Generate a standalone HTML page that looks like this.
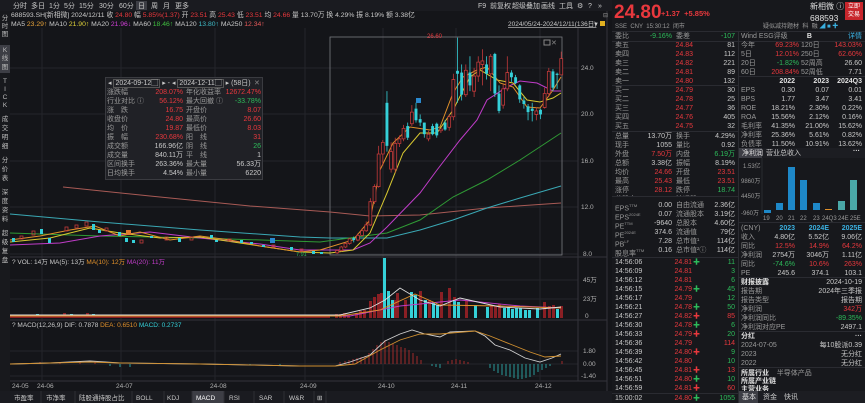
<!DOCTYPE html>
<html><head><meta charset="utf-8">
<style>
*{margin:0;padding:0;box-sizing:border-box}
body{width:865px;height:403px;overflow:hidden;background:#141519;font-family:"Liberation Sans","Noto Sans CJK SC",sans-serif;font-size:7px;color:#c9c9c9;position:relative}
.a{position:absolute;white-space:nowrap;line-height:9px}
.row{position:absolute;display:flex;height:9px;line-height:9px;white-space:nowrap}
.row span{display:block;overflow:visible}
.l{text-align:left}.rt{text-align:right}
.red{color:#e8383d}.grn{color:#2dbb5a}.gry{color:#9a9a9a}.wht{color:#e0e0e0}
.hl{position:absolute;height:1px;background:#2a2b31}
.vl{position:absolute;width:1px;background:#2a2b31}
.cy rect{stroke:none}
</style></head><body>

<svg width="612" height="403" style="position:absolute;left:0;top:0" font-family="Liberation Sans, Noto Sans CJK SC, sans-serif" font-size="7">
<rect x="0" y="0" width="612" height="11" fill="#1a1b20"/>
<g fill="#c9c9c9">
<text x="13" y="8">分时</text><text x="31" y="8">多日</text><text x="49" y="8">1分</text><text x="64" y="8">5分</text><text x="79" y="8">15分</text><text x="99" y="8">30分</text><text x="119" y="8">60分</text>
<rect x="136" y="1" width="11" height="9" fill="#3d3e45"/>
<text x="138" y="8">日</text><text x="151" y="8">周</text><text x="163" y="8">月</text><text x="175" y="8">更多</text>
<text x="478" y="8">F9</text><text x="490" y="8">前复权</text><text x="512" y="8">超级叠加</text><text x="541" y="8">画线</text><text x="559" y="8">工具</text><text x="577" y="8">⚙</text><text x="588" y="8">?</text><text x="598" y="8">»</text>
</g>
<rect x="0" y="11" width="10" height="392" fill="#18191d"/>
<rect x="0" y="45" width="10" height="28" fill="#3d3e45"/>
<g fill="#bdbdbd" font-size="6.5" text-anchor="middle">
<text x="5" y="20">分</text><text x="5" y="28">时</text><text x="5" y="36">图</text>
<text x="5" y="52">K</text><text x="5" y="60">线</text><text x="5" y="69">图</text>
<text x="5" y="83">T</text><text x="5" y="91">I</text><text x="5" y="99">C</text><text x="5" y="107">K</text>
<text x="5" y="121">成</text><text x="5" y="130">交</text><text x="5" y="139">明</text><text x="5" y="148">细</text>
<text x="5" y="162">分</text><text x="5" y="171">价</text><text x="5" y="180">表</text>
<text x="5" y="194">深</text><text x="5" y="203">度</text><text x="5" y="212">资</text><text x="5" y="221">料</text>
<text x="5" y="235">超</text><text x="5" y="244">级</text><text x="5" y="253">复</text><text x="5" y="262">盘</text>
</g>
<g font-size="6.8">
<text x="11" y="17" fill="#c9c9c9">688593.SH[新相微]  2024/12/11  收 <tspan fill="#e8383d">24.80</tspan>  幅 <tspan fill="#e8383d">5.85%(1.37)</tspan>  开 <tspan fill="#e8383d">23.51</tspan>  高 <tspan fill="#e8383d">25.43</tspan>  低 <tspan fill="#e8383d">23.51</tspan>  均 <tspan fill="#e8383d">24.66</tspan>  量 13.70万  换 4.29%  振 8.19%  额 3.38亿</text>
<text x="11" y="26" fill="#c9c9c9">MA5 <tspan fill="#e8a33a">23.29↑</tspan>  MA10 <tspan fill="#e0d23a">21.90↑</tspan>  MA20 <tspan fill="#d13fd8">21.96↓</tspan>  MA60 <tspan fill="#3fbf3f">18.46↑</tspan>  MA120 <tspan fill="#3fbcc8">13.80↑</tspan>  MA250 <tspan fill="#e85a5a">12.34↑</tspan></text>
</g>
<text x="508" y="26" fill="#c9c9c9" font-size="6.5" text-decoration="underline">2024/05/24-2024/12/11(136日)</text>
<text x="593" y="26" fill="#ccc" font-size="6">▼</text><rect x="600" y="21" width="5" height="5" fill="#e0b020"/>
<g stroke="#24252b" stroke-width="1">
<line x1="10" y1="68" x2="578" y2="68"/><line x1="10" y1="114" x2="578" y2="114"/><line x1="10" y1="161" x2="578" y2="161"/><line x1="10" y1="207" x2="578" y2="207"/><line x1="10" y1="254" x2="578" y2="254"/>
<line x1="42" y1="28" x2="42" y2="380"/><line x1="121" y1="28" x2="121" y2="380"/><line x1="215" y1="28" x2="215" y2="380"/><line x1="305" y1="28" x2="305" y2="380"/><line x1="383" y1="28" x2="383" y2="380"/><line x1="456" y1="28" x2="456" y2="380"/><line x1="540" y1="28" x2="540" y2="380"/>
<line x1="10" y1="280" x2="578" y2="280"/><line x1="10" y1="299" x2="578" y2="299"/><line x1="10" y1="351" x2="578" y2="351"/><line x1="10" y1="364" x2="578" y2="364"/><line x1="10" y1="376" x2="578" y2="376"/>
</g>
<line x1="578" y1="28" x2="578" y2="381" stroke="#33343a"/>
<line x1="607" y1="11" x2="607" y2="403" stroke="#33343a"/>
<line x1="10" y1="257" x2="607" y2="257" stroke="#33343a"/>
<line x1="10" y1="320" x2="607" y2="320" stroke="#33343a"/>
<line x1="10" y1="381" x2="607" y2="381" stroke="#33343a"/>
<g fill="#b0b0b0" font-size="6.5">
<text x="581" y="70">24.0</text><text x="581" y="116">20.0</text><text x="581" y="163">16.0</text><text x="581" y="209">12.0</text><text x="583" y="256">8.0</text>
<text x="583" y="282">45万</text><text x="583" y="301">23万</text><text x="585" y="318">0</text>
<text x="583" y="353">1.80</text><text x="583" y="366">0.00</text><text x="581" y="378">-1.40</text>
</g>
<rect x="330" y="37" width="232" height="218" fill="none" stroke="#7a7b80" stroke-width="0.8"/>
<text x="427" y="38" fill="#e8383d" font-size="6">26.60</text>
<rect x="544" y="40" width="6" height="5" fill="none" stroke="#888"/><text x="551" y="45" fill="#888" font-size="7">✕</text>
<g fill="none" stroke-width="1">
<polyline stroke="#a85a55" points="63,187 150,196 250,206 330,212 370,216 420,215 487,208 561,203"/>
<polyline stroke="#3aa8b4" points="10,214 100,222 200,230 300,237 330,238 387,238 420,230 453,220 487,208 520,198 561,186"/>
<polyline stroke="#2f9a35" points="10,233 100,236 200,238 320,242 387,233 420,220 453,197 487,180 520,160 561,133"/>
<polyline stroke="#c03cc8" points="10,245 60,243 100,236 150,232 200,238 260,244 300,250 353,250 370,243 387,227 420,193 437,170 460,140 477,120 487,100 507,87 520,81 537,83 553,91 561,91"/>
<polyline stroke="#d8c830" points="10,242 50,238 90,228 120,233 160,238 200,237 260,246 300,252 330,253 353,250 370,233 387,193 403,153 420,133 437,133 453,110 470,77 480,70 497,80 513,83 527,100 540,102 553,98 561,93"/>
<polyline stroke="#e0902a" points="10,240 40,236 70,230 95,226 120,236 140,232 170,240 200,236 230,240 260,246 300,252 320,250 353,240 370,220 380,170 393,143 410,127 430,130 440,127 453,93 463,77 477,70 487,67 500,83 513,87 527,107 540,108 553,90 561,77"/>
</g>
<g fill="#35d0d8">
<rect x="12" y="238" width="3" height="4"/><rect x="40" y="229" width="3" height="5"/><rect x="48" y="238" width="3" height="5"/><rect x="92" y="224" width="3" height="6"/><rect x="98" y="230" width="3" height="3"/><rect x="118" y="232" width="3" height="4"/><rect x="125" y="238" width="3" height="4"/><rect x="132" y="240" width="3" height="3"/><rect x="150" y="236" width="3" height="2"/><rect x="178" y="238" width="3" height="4"/><rect x="210" y="235" width="3" height="3"/><rect x="215" y="240" width="3" height="2"/><rect x="240" y="240" width="3" height="3"/><rect x="250" y="242" width="3" height="2"/><rect x="262" y="245" width="3" height="2"/><rect x="290" y="247" width="3" height="3"/><rect x="312" y="251" width="3" height="3"/><rect x="320" y="252" width="3" height="2"/>
</g>
<g fill="none" stroke="#c23a3a" stroke-width="0.8">
<rect x="20" y="236" width="3" height="3"/><rect x="32" y="231" width="3" height="4"/><rect x="65" y="227" width="3" height="4"/><rect x="75" y="225" width="3" height="3"/><rect x="85" y="222" width="3" height="4"/><rect x="105" y="228" width="3" height="3"/><rect x="140" y="240" width="3" height="3"/><rect x="165" y="237" width="3" height="3"/><rect x="190" y="237" width="3" height="3"/><rect x="228" y="239" width="3" height="2"/><rect x="272" y="245" width="3" height="2"/><rect x="300" y="249" width="3" height="2"/>
</g>
<rect x="126" y="230" width="5" height="5" fill="#e07a30"/><rect x="270" y="238" width="5" height="5" fill="#2a8ad0"/>
<text x="296" y="256" fill="#2dbb5a" font-size="5.5">7.91</text>
<g transform="matrix(4.15 0 0 -11.63 333 347.04)">
<g stroke="#c23a3a" fill="#141519" stroke-width="0.8">
<line x1="1" y1="8.0" x2="1" y2="8.4" vector-effect="non-scaling-stroke"/><rect x="0.65" y="8.1" width="0.7" height="0.2" vector-effect="non-scaling-stroke"/>
<line x1="2" y1="8.2" x2="2" y2="8.7" vector-effect="non-scaling-stroke"/><rect x="1.65" y="8.3" width="0.7" height="0.3" vector-effect="non-scaling-stroke"/>
<line x1="3" y1="8.5" x2="3" y2="9.0" vector-effect="non-scaling-stroke"/><rect x="2.65" y="8.6" width="0.7" height="0.3" vector-effect="non-scaling-stroke"/>
<line x1="4" y1="8.8" x2="4" y2="9.4" vector-effect="non-scaling-stroke"/><rect x="3.65" y="8.9" width="0.7" height="0.4" vector-effect="non-scaling-stroke"/>
<line x1="6" y1="9.1" x2="6" y2="9.8" vector-effect="non-scaling-stroke"/><rect x="5.65" y="9.2" width="0.7" height="0.4" vector-effect="non-scaling-stroke"/>
<line x1="7" y1="9.5" x2="7" y2="10.2" vector-effect="non-scaling-stroke"/><rect x="6.65" y="9.6" width="0.7" height="0.4" vector-effect="non-scaling-stroke"/>
<line x1="8" y1="9.9" x2="8" y2="10.8" vector-effect="non-scaling-stroke"/><rect x="7.65" y="10.0" width="0.7" height="0.5" vector-effect="non-scaling-stroke"/>
<line x1="9" y1="10.4" x2="9" y2="12.8" vector-effect="non-scaling-stroke"/><rect x="8.65" y="10.5" width="0.7" height="2.0" vector-effect="non-scaling-stroke"/>
<line x1="10" y1="12.3" x2="10" y2="14" vector-effect="non-scaling-stroke"/><rect x="9.65" y="12.5" width="0.7" height="1.3" vector-effect="non-scaling-stroke"/>
<line x1="11" y1="13.7" x2="11" y2="17.3" vector-effect="non-scaling-stroke"/><rect x="10.65" y="13.8" width="0.7" height="2.8" vector-effect="non-scaling-stroke"/>
<line x1="12" y1="15.6" x2="12" y2="17.8" vector-effect="non-scaling-stroke"/><rect x="11.65" y="16.6" width="0.7" height="1.0" vector-effect="non-scaling-stroke"/>
<line x1="14" y1="15" x2="14" y2="17.6" vector-effect="non-scaling-stroke"/><rect x="13.65" y="15.3" width="0.7" height="1.5" vector-effect="non-scaling-stroke"/>
<line x1="15" y1="15" x2="15" y2="18" vector-effect="non-scaling-stroke"/><rect x="14.65" y="15.3" width="0.7" height="2.2" vector-effect="non-scaling-stroke"/>
<line x1="16" y1="17.2" x2="16" y2="18.2" vector-effect="non-scaling-stroke"/><rect x="15.65" y="17.5" width="0.7" height="0.4" vector-effect="non-scaling-stroke"/>
<line x1="17" y1="17.7" x2="17" y2="19.1" vector-effect="non-scaling-stroke"/><rect x="16.65" y="17.9" width="0.7" height="0.9" vector-effect="non-scaling-stroke"/>
<line x1="19" y1="19" x2="19" y2="20.8" vector-effect="non-scaling-stroke"/><rect x="18.65" y="19.2" width="0.7" height="1.0" vector-effect="non-scaling-stroke"/>
<line x1="23" y1="17.7" x2="23" y2="18.6" vector-effect="non-scaling-stroke"/><rect x="22.65" y="17.9" width="0.7" height="0.4" vector-effect="non-scaling-stroke"/>
<line x1="26" y1="18.4" x2="26" y2="18.8" vector-effect="non-scaling-stroke"/><rect x="25.65" y="18.6" width="0.7" height="0.15" vector-effect="non-scaling-stroke"/>
<line x1="28" y1="18.6" x2="28" y2="20.0" vector-effect="non-scaling-stroke"/><rect x="27.65" y="18.9" width="0.7" height="0.9" vector-effect="non-scaling-stroke"/>
<line x1="29" y1="19.5" x2="29" y2="23.5" vector-effect="non-scaling-stroke"/><rect x="28.65" y="19.8" width="0.7" height="3.2" vector-effect="non-scaling-stroke"/>
<line x1="32" y1="21.5" x2="32" y2="24.3" vector-effect="non-scaling-stroke"/><rect x="31.65" y="21.7" width="0.7" height="2.1" vector-effect="non-scaling-stroke"/>
<line x1="34" y1="21.5" x2="34" y2="24" vector-effect="non-scaling-stroke"/><rect x="33.65" y="22" width="0.7" height="1.3" vector-effect="non-scaling-stroke"/>
<line x1="35" y1="22.8" x2="35" y2="25" vector-effect="non-scaling-stroke"/><rect x="34.65" y="23.3" width="0.7" height="1.2" vector-effect="non-scaling-stroke"/>
<line x1="36" y1="22.5" x2="36" y2="25.6" vector-effect="non-scaling-stroke"/><rect x="35.65" y="24.3" width="0.7" height="0.3" vector-effect="non-scaling-stroke"/>
<line x1="38" y1="22" x2="38" y2="25.2" vector-effect="non-scaling-stroke"/><rect x="37.65" y="23.5" width="0.7" height="1.5" vector-effect="non-scaling-stroke"/>
<line x1="41" y1="20.5" x2="41" y2="22.6" vector-effect="non-scaling-stroke"/><rect x="40.65" y="20.8" width="0.7" height="1.4" vector-effect="non-scaling-stroke"/>
<line x1="42" y1="22" x2="42" y2="25" vector-effect="non-scaling-stroke"/><rect x="41.65" y="22.2" width="0.7" height="1.4" vector-effect="non-scaling-stroke"/>
<line x1="49" y1="19.5" x2="49" y2="20.6" vector-effect="non-scaling-stroke"/><rect x="48.65" y="20.0" width="0.7" height="0.3" vector-effect="non-scaling-stroke"/>
<line x1="51" y1="20.5" x2="51" y2="22.3" vector-effect="non-scaling-stroke"/><rect x="50.65" y="20.6" width="0.7" height="1.2" vector-effect="non-scaling-stroke"/>
<line x1="52" y1="21.5" x2="52" y2="24" vector-effect="non-scaling-stroke"/><rect x="51.65" y="21.8" width="0.7" height="1.9" vector-effect="non-scaling-stroke"/>
<line x1="55" y1="23.4" x2="55" y2="25.4" vector-effect="non-scaling-stroke"/><rect x="54.65" y="23.4" width="0.7" height="1.4" vector-effect="non-scaling-stroke"/>
</g>
<g class="cy" stroke="#35d0d8" fill="#35d0d8" stroke-width="0.8">
<line x1="5" y1="9.0" x2="5" y2="9.5" vector-effect="non-scaling-stroke"/><rect x="4.65" y="9.2" width="0.7" height="0.15"/>
<line x1="13" y1="16.8" x2="13" y2="22" vector-effect="non-scaling-stroke"/><rect x="12.65" y="17.3" width="0.7" height="3.7"/>
<line x1="18" y1="17.8" x2="18" y2="19.3" vector-effect="non-scaling-stroke"/><rect x="17.65" y="18" width="0.7" height="1.0"/>
<line x1="20" y1="19.3" x2="20" y2="21" vector-effect="non-scaling-stroke"/><rect x="19.65" y="19.5" width="0.7" height="1.0"/>
<line x1="21" y1="19" x2="21" y2="20" vector-effect="non-scaling-stroke"/><rect x="20.65" y="19.3" width="0.7" height="0.3"/>
<line x1="22" y1="18" x2="22" y2="19.3" vector-effect="non-scaling-stroke"/><rect x="21.65" y="18.3" width="0.7" height="1.0"/>
<line x1="24" y1="18.2" x2="24" y2="19.2" vector-effect="non-scaling-stroke"/><rect x="23.65" y="18.3" width="0.7" height="0.7"/>
<line x1="25" y1="18" x2="25" y2="19.3" vector-effect="non-scaling-stroke"/><rect x="24.65" y="18.2" width="0.7" height="1.0"/>
<line x1="27" y1="18.6" x2="27" y2="19.5" vector-effect="non-scaling-stroke"/><rect x="26.65" y="18.7" width="0.7" height="0.6"/>
<line x1="30" y1="21" x2="30" y2="26.6" vector-effect="non-scaling-stroke"/><rect x="29.65" y="23.5" width="0.7" height="0.25"/>
<line x1="31" y1="21.2" x2="31" y2="24.3" vector-effect="non-scaling-stroke"/><rect x="30.65" y="21.7" width="0.7" height="1.9"/>
<line x1="33" y1="22" x2="33" y2="25" vector-effect="non-scaling-stroke"/><rect x="32.65" y="22.5" width="0.7" height="1.1"/>
<line x1="37" y1="23" x2="37" y2="25" vector-effect="non-scaling-stroke"/><rect x="36.65" y="23.5" width="0.7" height="0.8"/>
<line x1="39" y1="21.5" x2="39" y2="25.3" vector-effect="non-scaling-stroke"/><rect x="38.65" y="21.8" width="0.7" height="3.4"/>
<line x1="40" y1="20.1" x2="40" y2="22.5" vector-effect="non-scaling-stroke"/><rect x="39.65" y="20.3" width="0.7" height="1.5"/>
<line x1="43" y1="22.8" x2="43" y2="23.8" vector-effect="non-scaling-stroke"/><rect x="42.65" y="23.2" width="0.7" height="0.4"/>
<line x1="44" y1="22.6" x2="44" y2="23.4" vector-effect="non-scaling-stroke"/><rect x="43.65" y="22.7" width="0.7" height="0.5"/>
<line x1="45" y1="21" x2="45" y2="22.6" vector-effect="non-scaling-stroke"/><rect x="44.65" y="21.3" width="0.7" height="1.2"/>
<line x1="46" y1="20.5" x2="46" y2="21.5" vector-effect="non-scaling-stroke"/><rect x="45.65" y="20.9" width="0.7" height="0.3"/>
<line x1="47" y1="19.5" x2="47" y2="20.9" vector-effect="non-scaling-stroke"/><rect x="46.65" y="20.2" width="0.7" height="0.5"/>
<line x1="48" y1="19.4" x2="48" y2="21" vector-effect="non-scaling-stroke"/><rect x="47.65" y="20.3" width="0.7" height="0.2"/>
<line x1="50" y1="19.6" x2="50" y2="20.5" vector-effect="non-scaling-stroke"/><rect x="49.65" y="20" width="0.7" height="0.4"/>
<line x1="53" y1="22" x2="53" y2="23.9" vector-effect="non-scaling-stroke"/><rect x="52.65" y="22.3" width="0.7" height="1.4"/>
<line x1="54" y1="22.2" x2="54" y2="23.6" vector-effect="non-scaling-stroke"/><rect x="53.65" y="23.4" width="0.7" height="0.1"/>
</g>
</g>
<rect x="416" y="98" width="5" height="5" fill="#2a8ad0"/>
<text x="12" y="264" fill="#c9c9c9" font-size="6.5">?  VOL: 14万  MA(5): 13万  <tspan fill="#e0902a">MA(10): 12万</tspan>  <tspan fill="#c03cc8">MA(20): 11万</tspan></text>
<g fill="#35d0d8">
<rect x="12" y="316" width="3" height="2"/><rect x="30" y="315" width="3" height="3"/><rect x="36" y="314" width="3" height="4"/><rect x="60" y="315" width="3" height="3"/><rect x="70" y="314" width="3" height="4"/><rect x="76" y="315" width="3" height="3"/><rect x="92" y="314" width="3" height="4"/><rect x="100" y="315" width="3" height="3"/><rect x="130" y="316" width="3" height="2"/><rect x="160" y="316" width="3" height="2"/><rect x="190" y="316" width="3" height="2"/><rect x="225" y="316" width="3" height="2"/><rect x="260" y="316" width="3" height="2"/><rect x="300" y="316" width="3" height="2"/>
</g>
<g fill="#8a1f24">
<rect x="10" y="316" width="320" height="2"/><rect x="20" y="315" width="3" height="3"/><rect x="63" y="313" width="3" height="5"/><rect x="86" y="313" width="3" height="5"/><rect x="110" y="315" width="3" height="3"/>
</g>
<g fill="#8a1f24">
<rect x="335" y="314" width="3" height="4"/><rect x="339" y="314" width="3" height="4"/><rect x="343" y="313" width="3" height="5"/><rect x="347" y="315" width="3" height="3"/><rect x="355" y="313" width="3" height="5"/><rect x="359" y="311" width="3" height="7"/><rect x="363" y="310" width="3" height="8"/><rect x="369" y="301" width="3" height="17"/><rect x="373" y="297" width="3" height="21"/><rect x="377" y="294" width="3" height="24"/><rect x="380" y="293" width="3" height="25"/><rect x="394" y="300" width="3" height="18"/><rect x="396" y="293" width="3" height="25"/><rect x="404" y="300" width="3" height="18"/><rect x="419" y="291" width="3" height="27"/><rect x="428" y="300" width="3" height="18"/><rect x="440" y="292" width="3" height="26"/><rect x="448" y="288" width="3" height="30"/><rect x="453" y="297" width="3" height="21"/><rect x="465" y="300" width="3" height="18"/><rect x="490" y="305" width="3" height="13"/><rect x="494" y="306" width="3" height="12"/><rect x="498" y="304" width="3" height="14"/><rect x="543" y="302" width="3" height="16"/><rect x="548" y="306" width="3" height="12"/><rect x="552" y="305" width="3" height="13"/><rect x="560" y="306" width="3" height="12"/>
</g>
<g fill="#35d0d8">
<rect x="383" y="258" width="3" height="60"/><rect x="387" y="291" width="3" height="27"/><rect x="391" y="300" width="3" height="18"/><rect x="410" y="292" width="3" height="26"/><rect x="414" y="295" width="3" height="23"/><rect x="424" y="300" width="3" height="18"/><rect x="432" y="302" width="3" height="16"/><rect x="436" y="305" width="3" height="13"/><rect x="453" y="300" width="3" height="18"/><rect x="457" y="302" width="3" height="16"/><rect x="474" y="305" width="3" height="13"/><rect x="486" y="307" width="3" height="11"/><rect x="503" y="308" width="3" height="10"/><rect x="507" y="307" width="3" height="11"/><rect x="511" y="309" width="3" height="9"/><rect x="515" y="308" width="3" height="10"/><rect x="519" y="308" width="3" height="10"/><rect x="524" y="310" width="3" height="8"/><rect x="528" y="310" width="3" height="8"/><rect x="536" y="308" width="3" height="10"/><rect x="556" y="309" width="3" height="9"/>
</g>
<g fill="none" stroke-width="0.9">
<polyline stroke="#c03cc8" points="10,316 330,316 350,316 400,306 460,300 520,306 561,308"/>
<polyline stroke="#e0902a" points="10,316 340,316 380,310 415,294 440,305 500,306 561,308"/>
<polyline stroke="#dddddd" points="10,315 340,315 370,308 385,300 400,288 420,300 440,306 460,298 500,307 540,309 561,307"/>
</g>
<text x="12" y="327" fill="#c9c9c9" font-size="6.5">?  MACD(12,26,9)  DIF: 0.7878  <tspan fill="#e0902a">DEA: 0.6510</tspan>  <tspan fill="#35d0d8">MACD: 0.2737</tspan></text>
<g stroke="#a02a2a" stroke-width="1">
<line x1="40" y1="364" x2="40" y2="362"/><line x1="60" y1="364" x2="60" y2="362"/><line x1="80" y1="364" x2="80" y2="361"/><line x1="95" y1="364" x2="95" y2="361"/>
<line x1="340" y1="364" x2="340" y2="362"/><line x1="345" y1="364" x2="345" y2="361"/><line x1="349" y1="364" x2="349" y2="360"/><line x1="353" y1="364" x2="353" y2="359"/><line x1="357" y1="364" x2="357" y2="358"/><line x1="361" y1="364" x2="361" y2="357"/><line x1="365" y1="364" x2="365" y2="356"/><line x1="369" y1="364" x2="369" y2="353"/><line x1="373" y1="364" x2="373" y2="349"/><line x1="377" y1="364" x2="377" y2="345"/><line x1="381" y1="364" x2="381" y2="342"/><line x1="385" y1="364" x2="385" y2="340"/><line x1="389" y1="364" x2="389" y2="342"/><line x1="393" y1="364" x2="393" y2="344"/><line x1="397" y1="364" x2="397" y2="345"/><line x1="401" y1="364" x2="401" y2="347"/><line x1="405" y1="364" x2="405" y2="348"/><line x1="409" y1="364" x2="409" y2="350"/><line x1="413" y1="364" x2="413" y2="353"/><line x1="417" y1="364" x2="417" y2="356"/><line x1="421" y1="364" x2="421" y2="360"/>
<line x1="448" y1="364" x2="448" y2="361"/><line x1="452" y1="364" x2="452" y2="360"/><line x1="456" y1="364" x2="456" y2="359"/><line x1="460" y1="364" x2="460" y2="360"/><line x1="464" y1="364" x2="464" y2="361"/><line x1="468" y1="364" x2="468" y2="362"/><line x1="562" y1="364" x2="562" y2="361"/>
</g>
<g stroke="#2a9a9a" stroke-width="1">
<line x1="110" y1="364" x2="110" y2="366"/><line x1="120" y1="364" x2="120" y2="367"/><line x1="130" y1="364" x2="130" y2="367"/><line x1="250" y1="364" x2="250" y2="365"/><line x1="280" y1="364" x2="280" y2="366"/>
<line x1="432" y1="364" x2="432" y2="366"/><line x1="436" y1="364" x2="436" y2="367"/><line x1="440" y1="364" x2="440" y2="368"/>
<line x1="490" y1="364" x2="490" y2="368"/><line x1="494" y1="364" x2="494" y2="371"/><line x1="498" y1="364" x2="498" y2="373"/><line x1="502" y1="364" x2="502" y2="375"/><line x1="506" y1="364" x2="506" y2="376"/><line x1="510" y1="364" x2="510" y2="377"/><line x1="514" y1="364" x2="514" y2="378"/><line x1="518" y1="364" x2="518" y2="379"/><line x1="522" y1="364" x2="522" y2="379"/><line x1="526" y1="364" x2="526" y2="378"/><line x1="530" y1="364" x2="530" y2="377"/><line x1="534" y1="364" x2="534" y2="375"/><line x1="538" y1="364" x2="538" y2="372"/><line x1="542" y1="364" x2="542" y2="370"/><line x1="546" y1="364" x2="546" y2="368"/><line x1="550" y1="364" x2="550" y2="366"/>
</g>
<g fill="none" stroke-width="0.9">
<polyline stroke="#d0d0d0" points="10,364 50,363 90,361 120,363 200,364 300,366 335,366 350,362 370,355 385,341 400,334 412,330 425,334 440,337 450,332 475,331 485,336 495,345 510,350 525,358 540,362 552,358 561,354"/>
<polyline stroke="#d09030" points="10,364 50,363 90,362 120,363 200,364 300,366 335,366 355,364 380,350 400,340 420,334 440,334 475,331 490,336 510,344 530,352 545,357 561,356"/>
</g>
<g fill="#b0b0b0" font-size="6.5">
<text x="12" y="388">24-05</text><text x="37" y="388">24-06</text><text x="116" y="388">24-07</text><text x="210" y="388">24-08</text><text x="300" y="388">24-09</text><text x="378" y="388">24-10</text><text x="451" y="388">24-11</text><text x="535" y="388">24-12</text>
</g>
<rect x="0" y="391" width="612" height="12" fill="#1a1b20"/>
<rect x="192" y="391" width="32" height="12" fill="#3d3e45"/>
<g stroke="#2e2f35"><line x1="41" y1="391" x2="41" y2="403"/><line x1="75" y1="391" x2="75" y2="403"/><line x1="132" y1="391" x2="132" y2="403"/><line x1="164" y1="391" x2="164" y2="403"/><line x1="192" y1="391" x2="192" y2="403"/><line x1="224" y1="391" x2="224" y2="403"/><line x1="254" y1="391" x2="254" y2="403"/><line x1="284" y1="391" x2="284" y2="403"/><line x1="314" y1="391" x2="314" y2="403"/><line x1="326" y1="391" x2="326" y2="403"/></g>
<g fill="#c9c9c9" font-size="6.5">
<text x="14" y="400">市盈率</text><text x="46" y="400">市净率</text><text x="79" y="400">陆股通持股占比</text><text x="136" y="400">BOLL</text><text x="167" y="400">KDJ</text><text x="196" y="400" fill="#fff">MACD</text><text x="229" y="400">RSI</text><text x="259" y="400">SAR</text><text x="289" y="400">W&amp;R</text><text x="317" y="400">⊞</text>
</g>
</svg>

<div style="position:absolute;left:105px;top:77px;width:158px;height:103px;background:#202126;border:1px solid #3a3b40">
<div class="a" style="left:2px;top:1px;color:#c9c9c9">◂ <span style="border:1px solid #555;padding:0 1px">2024-09-12▢</span> ▸ - ◂ <span style="border:1px solid #555;padding:0 1px">2024-12-11▢</span> ▸ (58日)</div>
<div class="a" style="left:148px;top:1px;color:#888">✕</div>
</div>
<div style="position:absolute;left:107px;top:88px">
<div class="row" style="top:0"><span style="width:40px" class="gry">涨跌幅</span><span style="width:36px" class="rt red">208.07%</span><span style="width:34px;padding-left:3px" class="gry">年化收益率</span><span style="width:44px" class="rt red">12672.47%</span></div>
<div class="row" style="top:9px"><span style="width:40px" class="gry">行业对比 ⓘ</span><span style="width:36px" class="rt red">56.12%</span><span style="width:34px;padding-left:3px" class="gry">最大回撤 ⓘ</span><span style="width:44px" class="rt grn">-33.78%</span></div>
<div class="row" style="top:18px"><span style="width:40px" class="gry">涨　跌</span><span style="width:36px" class="rt red">16.75</span><span style="width:34px;padding-left:3px" class="gry">开盘价</span><span style="width:44px" class="rt red">8.07</span></div>
<div class="row" style="top:27px"><span style="width:40px" class="gry">收盘价</span><span style="width:36px" class="rt red">24.80</span><span style="width:34px;padding-left:3px" class="gry">最高价</span><span style="width:44px" class="rt red">26.60</span></div>
<div class="row" style="top:36px"><span style="width:40px" class="gry">均　价</span><span style="width:36px" class="rt red">19.87</span><span style="width:34px;padding-left:3px" class="gry">最低价</span><span style="width:44px" class="rt red">8.03</span></div>
<div class="row" style="top:45px"><span style="width:40px" class="gry">振　幅</span><span style="width:36px" class="rt red">230.68%</span><span style="width:34px;padding-left:3px" class="gry">阳　线</span><span style="width:44px" class="rt red">31</span></div>
<div class="row" style="top:54px"><span style="width:40px" class="gry">成交额</span><span style="width:36px" class="rt">166.96亿</span><span style="width:34px;padding-left:3px" class="gry">阴　线</span><span style="width:44px" class="rt grn">26</span></div>
<div class="row" style="top:63px"><span style="width:40px" class="gry">成交量</span><span style="width:36px" class="rt">840.11万</span><span style="width:34px;padding-left:3px" class="gry">平　线</span><span style="width:44px" class="rt">1</span></div>
<div class="row" style="top:72px"><span style="width:40px" class="gry">区间换手</span><span style="width:36px" class="rt">263.36%</span><span style="width:34px;padding-left:3px" class="gry">最大量</span><span style="width:44px" class="rt">56.33万</span></div>
<div class="row" style="top:81px"><span style="width:40px" class="gry">日均换手</span><span style="width:36px" class="rt">4.54%</span><span style="width:34px;padding-left:3px" class="gry">最小量</span><span style="width:44px" class="rt">6220</span></div>
</div>

<div style="position:absolute;left:612px;top:0;width:253px;height:403px;background:#17181c"></div>
<div class="a red" style="left:614px;top:3px;font-size:19px;line-height:20px;font-weight:bold">24.80</div>
<div class="a red" style="left:661px;top:9px;font-size:7.5px;font-weight:bold">+1.37 &nbsp;+5.85%</div>
<div class="a wht" style="left:810px;top:2px;font-size:8px;line-height:10px">新相微 ⓘ</div>
<div class="a wht" style="left:810px;top:13px;font-size:8.5px;line-height:10px">688593</div>
<div style="position:absolute;left:845px;top:2px;width:18px;height:18px;background:#c8262c;color:#fff;font-size:6px;line-height:8px;text-align:center;padding-top:1px">立即<br>交易</div>
<div class="a gry" style="left:615px;top:23px;font-size:6px">SSE &nbsp;CNY &nbsp;15:30:12 &nbsp;闭市</div>
<div class="a gry" style="left:763px;top:23px;font-size:6px">疑似减持题材 &nbsp;科 &nbsp;融 <span style="color:#3ab0e0">◢ ■ ✚</span></div>
<div class="hl" style="left:612px;top:31px;width:253px"></div>
<div class="vl" style="left:738px;top:31px;height:372px"></div>

<div style="position:absolute;left:615px;top:32px">
<div class="row" style="top:0"><span style="width:22px" class="gry">委比</span><span style="width:35px" class="rt grn">-9.16%</span><span style="width:28px;padding-left:4px" class="gry">委差</span><span style="width:35px" class="rt grn">-107</span></div>
</div>
<div class="hl" style="left:612px;top:41px;width:126px"></div>
<div style="position:absolute;left:615px;top:41px">
<div class="row" style="top:0"><span style="width:28px" class="gry">卖五</span><span style="width:50px" class="rt red">24.84</span><span style="width:42px" class="rt">81</span></div>
<div class="row" style="top:9px"><span style="width:28px" class="gry">卖四</span><span style="width:50px" class="rt red">24.83</span><span style="width:42px" class="rt">112</span></div>
<div class="row" style="top:18px"><span style="width:28px" class="gry">卖三</span><span style="width:50px" class="rt red">24.82</span><span style="width:42px" class="rt">221</span></div>
<div class="row" style="top:27px"><span style="width:28px" class="gry">卖二</span><span style="width:50px" class="rt red">24.81</span><span style="width:42px" class="rt">89</span></div>
<div class="row" style="top:36px"><span style="width:28px" class="gry">卖一</span><span style="width:50px" class="rt red">24.80</span><span style="width:42px" class="rt">132</span></div>
<div class="row" style="top:45px"><span style="width:28px" class="gry">买一</span><span style="width:50px" class="rt red">24.79</span><span style="width:42px" class="rt">30</span></div>
<div class="row" style="top:54px"><span style="width:28px" class="gry">买二</span><span style="width:50px" class="rt red">24.78</span><span style="width:42px" class="rt">25</span></div>
<div class="row" style="top:63px"><span style="width:28px" class="gry">买三</span><span style="width:50px" class="rt red">24.77</span><span style="width:42px" class="rt">36</span></div>
<div class="row" style="top:72px"><span style="width:28px" class="gry">买四</span><span style="width:50px" class="rt red">24.76</span><span style="width:42px" class="rt">405</span></div>
<div class="row" style="top:81px"><span style="width:28px" class="gry">买五</span><span style="width:50px" class="rt red">24.75</span><span style="width:42px" class="rt">32</span></div>
</div>
<div class="hl" style="left:612px;top:85px;width:126px"></div>
<div class="hl" style="left:612px;top:131px;width:126px"></div>
<div style="position:absolute;left:615px;top:132px">
<div class="row" style="top:0"><span style="width:22px" class="gry">总量</span><span style="width:35px" class="rt">13.70万</span><span style="width:28px;padding-left:4px" class="gry">换手</span><span style="width:35px" class="rt">4.29%</span></div>
<div class="row" style="top:9px"><span style="width:22px" class="gry">现手</span><span style="width:35px" class="rt">1055</span><span style="width:28px;padding-left:4px" class="gry">量比</span><span style="width:35px" class="rt">0.92</span></div>
<div class="row" style="top:18px"><span style="width:22px" class="gry">外盘</span><span style="width:35px" class="rt red">7.50万</span><span style="width:28px;padding-left:4px" class="gry">内盘</span><span style="width:35px" class="rt grn">6.19万</span></div>
<div class="row" style="top:27px"><span style="width:22px" class="gry">总额</span><span style="width:35px" class="rt">3.38亿</span><span style="width:28px;padding-left:4px" class="gry">振幅</span><span style="width:35px" class="rt">8.19%</span></div>
<div class="row" style="top:36px"><span style="width:22px" class="gry">均价</span><span style="width:35px" class="rt red">24.66</span><span style="width:28px;padding-left:4px" class="gry">开盘</span><span style="width:35px" class="rt red">23.51</span></div>
<div class="row" style="top:45px"><span style="width:22px" class="gry">最高</span><span style="width:35px" class="rt red">25.43</span><span style="width:28px;padding-left:4px" class="gry">最低</span><span style="width:35px" class="rt red">23.51</span></div>
<div class="row" style="top:54px"><span style="width:22px" class="gry">涨停</span><span style="width:35px" class="rt red">28.12</span><span style="width:28px;padding-left:4px" class="gry">跌停</span><span style="width:35px" class="rt grn">18.74</span></div>
<div class="row" style="top:63px"><span style="width:22px" class="gry">总股本</span><span style="width:35px" class="rt">0</span><span style="width:28px;padding-left:4px" class="gry">流通股</span><span style="width:35px" class="rt">0</span></div>
</div>
<div style="position:absolute;left:612px;top:196px;width:126px;height:63px;background:#17181c"></div>
<div class="hl" style="left:612px;top:196px;width:126px"></div>
<div style="position:absolute;left:615px;top:201px">
<div class="row" style="top:0"><span style="width:22px" class="gry">EPS<sup style="font-size:4px">TTM</sup></span><span style="width:35px" class="rt">0.00</span><span style="width:28px;padding-left:4px" class="gry">自由流通</span><span style="width:35px" class="rt">2.36亿</span></div>
<div class="row" style="top:9px"><span style="width:22px" class="gry">EPS<sup style="font-size:4px">2024E</sup></span><span style="width:35px" class="rt">0.07</span><span style="width:28px;padding-left:4px" class="gry">流通股本</span><span style="width:35px" class="rt">3.19亿</span></div>
<div class="row" style="top:18px"><span style="width:22px" class="gry">PE<sup style="font-size:4px">TTM</sup></span><span style="width:35px" class="rt">-9640</span><span style="width:28px;padding-left:4px" class="gry">总股本</span><span style="width:35px" class="rt">4.60亿</span></div>
<div class="row" style="top:27px"><span style="width:22px" class="gry">PE<sup style="font-size:4px">2024E</sup></span><span style="width:35px" class="rt">374.6</span><span style="width:28px;padding-left:4px" class="gry">流通值</span><span style="width:35px" class="rt">79亿</span></div>
<div class="row" style="top:36px"><span style="width:22px" class="gry">PB<sup style="font-size:4px">LF</sup></span><span style="width:35px" class="rt">7.28</span><span style="width:28px;padding-left:4px" class="gry">总市值¹</span><span style="width:35px" class="rt">114亿</span></div>
<div class="row" style="top:45px"><span style="width:22px" class="gry">股息率<sup style="font-size:4px">TTM</sup></span><span style="width:35px" class="rt">0.16</span><span style="width:28px;padding-left:4px" class="gry">总市值²ⓘ</span><span style="width:35px" class="rt">114亿</span></div>
</div>
<div class="hl" style="left:612px;top:257px;width:126px"></div>
<div style="position:absolute;left:615px;top:258px">
<div class="row" style="top:0"><span style="width:40px">14:56:06</span><span style="width:37px" class="rt red">24.81</span><span style="width:8px;padding-left:1px" class="grn">✚</span><span style="width:35px" class="rt grn">11</span></div>
<div class="row" style="top:9px"><span style="width:40px">14:56:09</span><span style="width:37px" class="rt red">24.81</span><span style="width:8px"></span><span style="width:35px" class="rt grn">3</span></div>
<div class="row" style="top:18px"><span style="width:40px">14:56:12</span><span style="width:37px" class="rt red">24.81</span><span style="width:8px"></span><span style="width:35px" class="rt grn">6</span></div>
<div class="row" style="top:27px"><span style="width:40px">14:56:15</span><span style="width:37px" class="rt red">24.79</span><span style="width:8px;padding-left:1px" class="grn">✚</span><span style="width:35px" class="rt grn">45</span></div>
<div class="row" style="top:36px"><span style="width:40px">14:56:17</span><span style="width:37px" class="rt red">24.79</span><span style="width:8px"></span><span style="width:35px" class="rt grn">12</span></div>
<div class="row" style="top:45px"><span style="width:40px">14:56:21</span><span style="width:37px" class="rt red">24.78</span><span style="width:8px;padding-left:1px" class="grn">✚</span><span style="width:35px" class="rt grn">50</span></div>
<div class="row" style="top:54px"><span style="width:40px">14:56:27</span><span style="width:37px" class="rt red">24.82</span><span style="width:8px;padding-left:1px" class="red">✚</span><span style="width:35px" class="rt red">85</span></div>
<div class="row" style="top:63px"><span style="width:40px">14:56:30</span><span style="width:37px" class="rt red">24.78</span><span style="width:8px;padding-left:1px" class="grn">✚</span><span style="width:35px" class="rt grn">6</span></div>
<div class="row" style="top:72px"><span style="width:40px">14:56:33</span><span style="width:37px" class="rt red">24.79</span><span style="width:8px;padding-left:1px" class="red">✚</span><span style="width:35px" class="rt grn">20</span></div>
<div class="row" style="top:81px"><span style="width:40px">14:56:36</span><span style="width:37px" class="rt red">24.79</span><span style="width:8px"></span><span style="width:35px" class="rt red">114</span></div>
<div class="row" style="top:90px"><span style="width:40px">14:56:39</span><span style="width:37px" class="rt red">24.80</span><span style="width:8px;padding-left:1px" class="red">✚</span><span style="width:35px" class="rt grn">9</span></div>
<div class="row" style="top:99px"><span style="width:40px">14:56:42</span><span style="width:37px" class="rt red">24.80</span><span style="width:8px"></span><span style="width:35px" class="rt grn">10</span></div>
<div class="row" style="top:108px"><span style="width:40px">14:56:45</span><span style="width:37px" class="rt red">24.81</span><span style="width:8px;padding-left:1px" class="red">✚</span><span style="width:35px" class="rt red">13</span></div>
<div class="row" style="top:117px"><span style="width:40px">14:56:51</span><span style="width:37px" class="rt red">24.80</span><span style="width:8px;padding-left:1px" class="grn">✚</span><span style="width:35px" class="rt grn">10</span></div>
<div class="row" style="top:126px"><span style="width:40px">14:56:59</span><span style="width:37px" class="rt red">24.81</span><span style="width:8px;padding-left:1px" class="red">✚</span><span style="width:35px" class="rt red">60</span></div>
<div class="hl" style="left:-3px;top:135px;width:126px"></div>
<div class="row" style="top:136px"><span style="width:40px">15:00:02</span><span style="width:37px" class="rt red">24.80</span><span style="width:8px;padding-left:1px" class="grn">✚</span><span style="width:35px" class="rt grn">1055</span></div>
</div>

<div style="position:absolute;left:741px;top:32px">
<div class="row" style="top:0"><span style="width:60px" class="gry">Wind ESG评级</span><span style="width:30px;font-weight:bold" class="wht">&nbsp;&nbsp;&nbsp;B</span><span style="width:31px;color:#3ab0e0" class="rt">详情</span></div>
</div>
<div class="hl" style="left:739px;top:41px;width:126px"></div>
<div style="position:absolute;left:741px;top:41px">
<div class="row" style="top:0"><span style="width:20px" class="gry">今年</span><span style="width:38px" class="rt red">69.23%</span><span style="width:24px;padding-left:2px" class="gry">120日</span><span style="width:39px" class="rt red">143.03%</span></div>
<div class="row" style="top:9px"><span style="width:20px" class="gry">5日</span><span style="width:38px" class="rt red">12.01%</span><span style="width:24px;padding-left:2px" class="gry">250日</span><span style="width:39px" class="rt red">62.60%</span></div>
<div class="row" style="top:18px"><span style="width:20px" class="gry">20日</span><span style="width:38px" class="rt grn">-1.82%</span><span style="width:24px;padding-left:2px" class="gry">52周高</span><span style="width:39px" class="rt">26.60</span></div>
<div class="row" style="top:27px"><span style="width:20px" class="gry">60日</span><span style="width:38px" class="rt red">208.84%</span><span style="width:24px;padding-left:2px" class="gry">52周低</span><span style="width:39px" class="rt">7.71</span></div>
</div>
<div class="hl" style="left:739px;top:76px;width:126px"></div>
<div style="position:absolute;left:741px;top:77px">
<div class="row" style="top:0;font-weight:bold"><span style="width:22px"></span><span style="width:32px" class="rt wht">2022</span><span style="width:34px" class="rt wht">2023</span><span style="width:33px" class="rt wht">2024Q3</span></div>
<div class="row" style="top:9px"><span style="width:22px" class="gry">EPS</span><span style="width:32px" class="rt">0.30</span><span style="width:34px" class="rt">0.07</span><span style="width:33px" class="rt">0.01</span></div>
<div class="row" style="top:18px"><span style="width:22px" class="gry">BPS</span><span style="width:32px" class="rt">1.77</span><span style="width:34px" class="rt">3.47</span><span style="width:33px" class="rt">3.41</span></div>
<div class="row" style="top:27px"><span style="width:22px" class="gry">ROE</span><span style="width:32px" class="rt">18.21%</span><span style="width:34px" class="rt">2.30%</span><span style="width:33px" class="rt">0.22%</span></div>
<div class="row" style="top:36px"><span style="width:22px" class="gry">ROA</span><span style="width:32px" class="rt">15.56%</span><span style="width:34px" class="rt">2.12%</span><span style="width:33px" class="rt">0.16%</span></div>
<div class="row" style="top:45px"><span style="width:22px" class="gry">毛利率</span><span style="width:32px" class="rt">41.35%</span><span style="width:34px" class="rt">21.00%</span><span style="width:33px" class="rt">15.62%</span></div>
<div class="row" style="top:54px"><span style="width:22px" class="gry">净利率</span><span style="width:32px" class="rt">25.36%</span><span style="width:34px" class="rt">5.61%</span><span style="width:33px" class="rt">0.82%</span></div>
<div class="row" style="top:63px"><span style="width:22px" class="gry">负债率</span><span style="width:32px" class="rt">11.50%</span><span style="width:34px" class="rt">10.91%</span><span style="width:33px" class="rt">13.62%</span></div>
</div>
<div style="position:absolute;left:739px;top:148px;width:126px;height:10px;background:#1c1d22"></div>
<div style="position:absolute;left:739px;top:148px;width:23px;height:10px;background:#3d3e45"></div>
<div class="a wht" style="left:742px;top:149px">净利润</div>
<div class="a" style="left:766px;top:149px">营业总收入</div>
<div class="a wht" style="left:853px;top:147px;font-weight:bold">···</div>
<svg width="126" height="64" style="position:absolute;left:739px;top:158px" font-family="Liberation Sans, sans-serif" font-size="6">
<g fill="#9a9a9a"><text x="4" y="10">1.53亿</text><text x="2" y="25">9860万</text><text x="2" y="40">4450万</text><text x="2" y="57">-960万</text>
<text x="24" y="62">19</text><text x="37" y="62">20</text><text x="49" y="62">21</text><text x="61" y="62">22</text><text x="74" y="62">23</text><text x="83" y="62">24Q3</text><text x="99" y="62">24E</text><text x="111" y="62">25E</text></g>
<line x1="23" y1="0" x2="23" y2="56" stroke="#2a2b31"/>
<rect x="25" y="52" width="7" height="3" fill="#1e88c8"/>
<rect x="37" y="45" width="7" height="7" fill="#1e88c8"/>
<rect x="49" y="9" width="7" height="43" fill="#1e88c8"/>
<rect x="61" y="22" width="7" height="30" fill="#1e88c8"/>
<rect x="74" y="45" width="7" height="7" fill="#1e88c8"/>
<rect x="86" y="51" width="7" height="1" fill="#e0902a"/>
<rect x="99" y="43" width="7" height="9" fill="#4aa8a8"/>
<rect x="111" y="22" width="7" height="30" fill="#4aa8a8"/>
</svg>
<div class="hl" style="left:739px;top:222px;width:126px"></div>
<div style="position:absolute;left:741px;top:224px">
<div class="row" style="top:0"><span style="width:22px" class="gry">(CNY)</span><span style="width:32px;color:#3ab0e0;font-weight:bold" class="rt">2023</span><span style="width:34px;color:#3ab0e0;font-weight:bold" class="rt">2024E</span><span style="width:33px;color:#3ab0e0;font-weight:bold" class="rt">2025E</span></div>
<div class="row" style="top:9px"><span style="width:22px" class="gry">收入</span><span style="width:32px" class="rt">4.80亿</span><span style="width:34px" class="rt">5.52亿</span><span style="width:33px" class="rt">9.06亿</span></div>
<div class="row" style="top:18px"><span style="width:22px" class="gry">同比</span><span style="width:32px" class="rt red">12.5%</span><span style="width:34px" class="rt red">14.9%</span><span style="width:33px" class="rt red">64.2%</span></div>
<div class="row" style="top:27px"><span style="width:22px" class="gry">净利润</span><span style="width:32px" class="rt">2754万</span><span style="width:34px" class="rt">3046万</span><span style="width:33px" class="rt">1.11亿</span></div>
<div class="row" style="top:36px"><span style="width:22px" class="gry">同比</span><span style="width:32px" class="rt grn">-74.6%</span><span style="width:34px" class="rt red">10.6%</span><span style="width:33px" class="rt red">263%</span></div>
<div class="row" style="top:45px"><span style="width:22px" class="gry">PE</span><span style="width:32px" class="rt">245.6</span><span style="width:34px" class="rt">374.1</span><span style="width:33px" class="rt">103.1</span></div>
</div>
<div class="hl" style="left:739px;top:277px;width:126px"></div>
<div style="position:absolute;left:741px;top:278px;width:121px">
<div class="row" style="top:0;width:121px;justify-content:space-between"><span class="wht" style="font-weight:bold">财报披露</span><span>2024-10-19</span></div>
<div class="row" style="top:9px;width:121px;justify-content:space-between"><span class="gry">报告期</span><span>2024年三季报</span></div>
<div class="row" style="top:18px;width:121px;justify-content:space-between"><span class="gry">报告类型</span><span>报告期</span></div>
<div class="row" style="top:27px;width:121px;justify-content:space-between"><span class="gry">净利润</span><span class="red">342万</span></div>
<div class="row" style="top:36px;width:121px;justify-content:space-between"><span class="gry">净利润同比</span><span class="grn">-89.35%</span></div>
<div class="row" style="top:45px;width:121px;justify-content:space-between"><span class="gry">净利润对应PE</span><span>2497.1</span></div>
</div>
<div class="hl" style="left:739px;top:331px;width:126px"></div>
<div style="position:absolute;left:741px;top:332px;width:121px">
<div class="row" style="top:0;width:121px;justify-content:space-between"><span class="wht" style="font-weight:bold">分红</span><span style="font-weight:bold">···</span></div>
<div class="row" style="top:9px;width:121px;justify-content:space-between"><span class="gry">2024-07-05</span><span>每10股派0.39</span></div>
<div class="row" style="top:18px;width:121px;justify-content:space-between"><span class="gry">2023</span><span>无分红</span></div>
<div class="row" style="top:27px;width:121px;justify-content:space-between"><span class="gry">2022</span><span>无分红</span></div>
</div>
<div class="hl" style="left:739px;top:367px;width:126px"></div>
<div class="a" style="left:741px;top:369px"><b class="wht">所属行业</b> &nbsp;&nbsp;&nbsp;<span class="gry">半导体产品</span></div>
<div class="a wht" style="left:741px;top:377px;font-weight:bold">所属产业链</div>
<div class="a wht" style="left:741px;top:385px;font-weight:bold">主营业务</div>
<div style="position:absolute;left:739px;top:391px;width:126px;height:12px;background:#1c1d22"></div>
<div style="position:absolute;left:739px;top:391px;width:19px;height:12px;background:#3d3e45"></div>
<div class="a wht" style="left:742px;top:393px">基本</div>
<div class="a" style="left:763px;top:393px">资金</div>
<div class="a" style="left:784px;top:393px">快讯</div>
<div class="a gry" style="left:603px;top:12px;font-size:6px">⊟</div>
</body></html>
